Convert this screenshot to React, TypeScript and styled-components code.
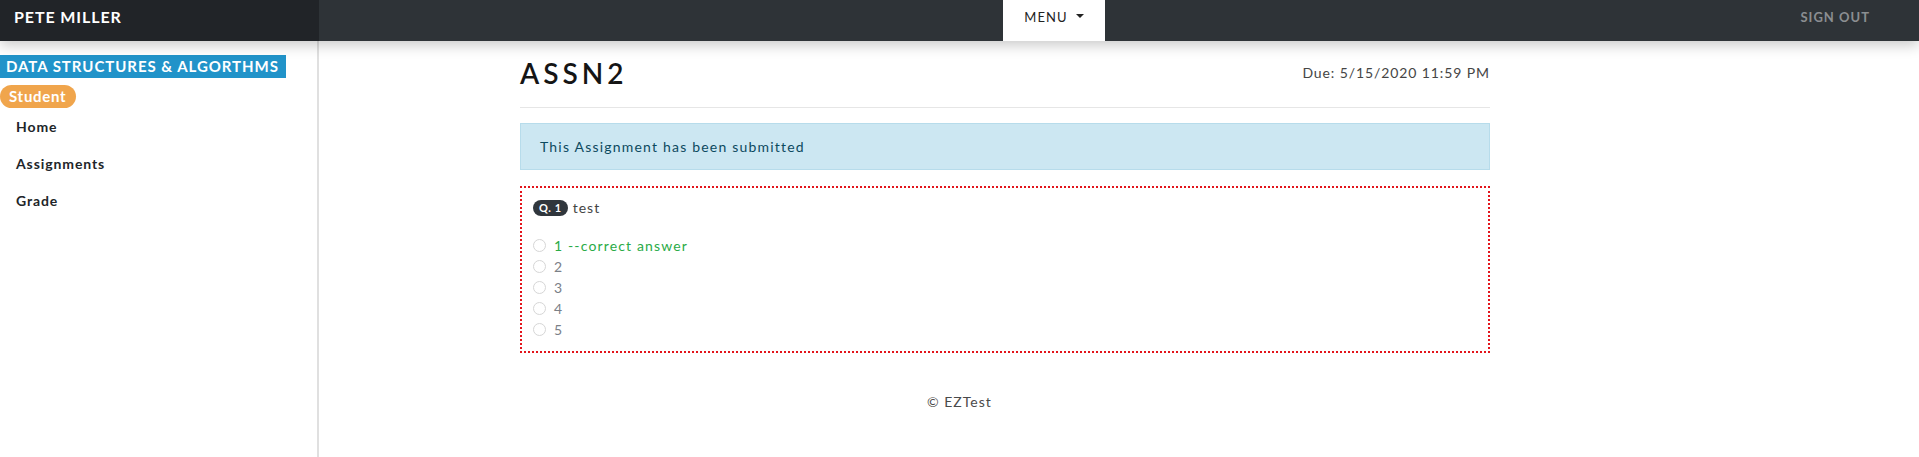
import React from "react";
import styled, { createGlobalStyle } from "styled-components";

const Global = createGlobalStyle`
  html, body { margin: 0; padding: 0; background: #fff; }
  body { font-family: Lato, "Noto Sans", sans-serif; color: #212529; }
  * { box-sizing: border-box; }
`;

const Page = styled.div`
  position: relative;
  min-height: 457px;
  display: grid;
  grid-template-columns: 317px 2px 1fr;
  grid-template-rows: 41px 1fr;
`;

const Nav = styled.header`
  grid-column: 1 / 4;
  grid-row: 1;
  display: flex;
  align-items: stretch;
  background: #2e3337;
  box-shadow: 0 4px 14px rgba(0, 0, 0, 0.22);
  position: relative;
  z-index: 2;
`;

const Brand = styled.div`
  width: 319px;
  background: #212428;
  color: #fff;
  font-size: 16px;
  font-weight: 700;
  letter-spacing: 0.9px;
  padding: 0 0 8px 14px;
  display: flex;
  align-items: center;
`;

const NavCenter = styled.div`
  flex: 1;
  display: flex;
  padding-left: 684px;
`;

const MenuButton = styled.div`
  width: 102px;
  background: #fff;
  color: #222;
  font-size: 13px;
  letter-spacing: 1.1px;
  display: flex;
  align-items: center;
  justify-content: center;
  gap: 8px;
  padding-bottom: 8px;
`;

const Caret = styled.span`
  width: 0;
  height: 0;
  border-left: 4px solid transparent;
  border-right: 4px solid transparent;
  border-top: 4px solid #222;
  margin-top: -2px;
`;

const SignOut = styled.div`
  color: #8b8e91;
  font-size: 13px;
  font-weight: 700;
  letter-spacing: 1px;
  display: flex;
  align-items: center;
  padding: 0 49px 8px 0;
`;

const Sidebar = styled.aside`
  grid-column: 1;
  grid-row: 2;
  padding-top: 14px;
  display: flex;
  flex-direction: column;
  align-items: flex-start;
`;

const Divider = styled.div`
  grid-column: 2;
  grid-row: 1 / 3;
  background: #e0e0e0;
`;

const CourseTitle = styled.div`
  background: #2193c9;
  color: #fff;
  font-size: 15px;
  font-weight: 700;
  letter-spacing: 0.95px;
  height: 23px;
  line-height: 23px;
  padding: 0 7px 0 6px;
`;

const RoleBadge = styled.span`
  margin-top: 7px;
  background: #f0a54c;
  color: #fff;
  font-size: 15px;
  font-weight: 700;
  letter-spacing: 0.7px;
  height: 23px;
  line-height: 23px;
  padding: 0 10px 0 9px;
  border-radius: 12px;
`;

const NavList = styled.nav`
  display: flex;
  flex-direction: column;
`;

const NavItem = styled.a`
  color: #212529;
  font-size: 14px;
  font-weight: 700;
  letter-spacing: 0.9px;
  padding: 0 16px;
  height: 37px;
  line-height: 37px;
  text-decoration: none;
`;

const Main = styled.main`
  grid-column: 3;
  grid-row: 2;
  display: flex;
  flex-direction: column;
`;

const Container = styled.div`
  margin-left: 201px;
  width: 970px;
  display: flex;
  flex-direction: column;
`;

const HeaderRow = styled.div`
  display: flex;
  justify-content: space-between;
  align-items: flex-start;
  padding: 16px 0 18px;
  border-bottom: 1px solid #e6e6e6;
`;

const Title = styled.h1`
  margin: 0;
  font-size: 28px;
  font-weight: 600;
  letter-spacing: 4px;
  color: #151515;
  line-height: 32px;
`;

const Due = styled.div`
  font-size: 14px;
  color: #454545;
  letter-spacing: 0.9px;
  margin-top: 7px;
`;

const Alert = styled.div`
  margin-top: 15px;
  background: #cce7f2;
  border: 1px solid #b7dceb;
  color: #0c4a5f;
  font-size: 14px;
  letter-spacing: 1.2px;
  height: 47px;
  display: flex;
  align-items: center;
  padding-left: 19px;
`;

const QuestionBox = styled.section`
  margin-top: 16px;
  border: 2px dotted #e3141b;
  padding: 11px 11px 11px;
`;

const QuestionHead = styled.div`
  display: flex;
  align-items: center;
  gap: 5px;
`;

const QBadge = styled.span`
  background: #30363c;
  color: #fff;
  font-size: 11px;
  font-weight: 700;
  letter-spacing: 0.6px;
  height: 16px;
  line-height: 16px;
  padding: 0 6px;
  border-radius: 8px;
`;

const QText = styled.span`
  font-size: 14px;
  color: #444;
  letter-spacing: 1px;
`;

const Options = styled.div`
  margin-top: 19px;
  display: flex;
  flex-direction: column;
`;

const Option = styled.label<{ $correct?: boolean }>`
  display: flex;
  align-items: center;
  gap: 8px;
  height: 21px;
  font-size: 14px;
  letter-spacing: 1.15px;
  color: ${(p) => (p.$correct ? "#2aab47" : "#7b8087")};
`;

const Radio = styled.span`
  width: 13px;
  height: 13px;
  border-radius: 50%;
  border: 1px solid #d6d6d6;
  background: #fff;
  flex: none;
`;

const Footer = styled.footer`
  padding: 40px 0 0 608px;
  font-size: 14px;
  color: #4a4a4a;
  letter-spacing: 1px;
`;

const options = ["1 --correct answer", "2", "3", "4", "5"];

export default function App() {
  return (
    <>
      <Global />
      <Page>
        <Nav>
          <Brand>PETE MILLER</Brand>
          <NavCenter>
            <MenuButton>
              MENU <Caret />
            </MenuButton>
          </NavCenter>
          <SignOut>SIGN OUT</SignOut>
        </Nav>
        <Sidebar>
          <CourseTitle>DATA STRUCTURES &amp; ALGORTHMS</CourseTitle>
          <RoleBadge>Student</RoleBadge>
          <NavList>
            <NavItem>Home</NavItem>
            <NavItem>Assignments</NavItem>
            <NavItem>Grade</NavItem>
          </NavList>
        </Sidebar>
        <Divider />
        <Main>
          <Container>
            <HeaderRow>
              <Title>ASSN2</Title>
              <Due>Due: 5/15/2020 11:59 PM</Due>
            </HeaderRow>
            <Alert>This Assignment has been submitted</Alert>
            <QuestionBox>
              <QuestionHead>
                <QBadge>Q. 1</QBadge>
                <QText>test</QText>
              </QuestionHead>
              <Options>
                {options.map((o, i) => (
                  <Option key={o} $correct={i === 0}>
                    <Radio />
                    {o}
                  </Option>
                ))}
              </Options>
            </QuestionBox>
          </Container>
          <Footer>© EZTest</Footer>
        </Main>
      </Page>
    </>
  );
}
